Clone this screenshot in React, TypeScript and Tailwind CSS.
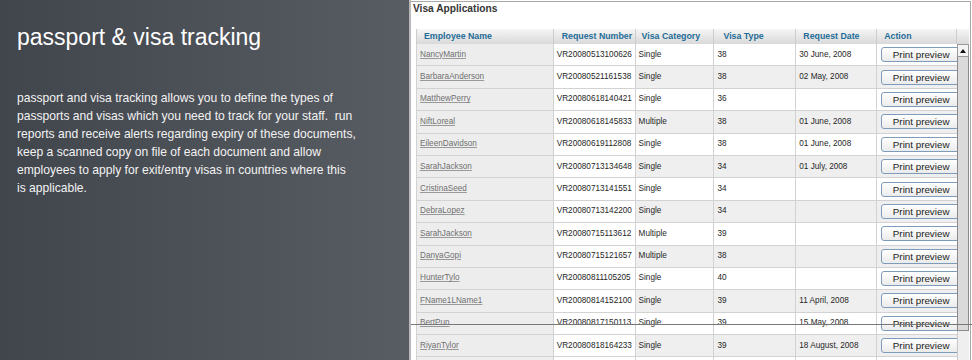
import React from "react";

type Row = { name: string; num: string; cat: string; type: string; date: string };

const rows: Row[] = [
  { name: "NancyMartin", num: "VR20080513100626", cat: "Single", type: "38", date: "30 June, 2008" },
  { name: "BarbaraAnderson", num: "VR20080521161538", cat: "Single", type: "38", date: "02 May, 2008" },
  { name: "MatthewPerry", num: "VR20080618140421", cat: "Single", type: "36", date: "" },
  { name: "NiftLoreal", num: "VR20080618145833", cat: "Multiple", type: "38", date: "01 June, 2008" },
  { name: "EileenDavidson", num: "VR20080619112808", cat: "Single", type: "38", date: "01 June, 2008" },
  { name: "SarahJackson", num: "VR20080713134648", cat: "Single", type: "34", date: "01 July, 2008" },
  { name: "CristinaSeed", num: "VR20080713141551", cat: "Single", type: "34", date: "" },
  { name: "DebraLopez", num: "VR20080713142200", cat: "Single", type: "34", date: "" },
  { name: "SarahJackson", num: "VR20080715113612", cat: "Multiple", type: "39", date: "" },
  { name: "DanyaGopi", num: "VR20080715121657", cat: "Multiple", type: "38", date: "" },
  { name: "HunterTylo", num: "VR20080811105205", cat: "Single", type: "40", date: "" },
  { name: "FName1LName1", num: "VR20080814152100", cat: "Single", type: "39", date: "11 April, 2008" },
  { name: "BertPun", num: "VR20080817150113", cat: "Single", type: "39", date: "15 May, 2008" },
  { name: "RiyanTylor", num: "VR20080818164233", cat: "Single", type: "39", date: "18 August, 2008" },
  { name: "", num: "", cat: "", type: "", date: "" },
];

const headCell =
  "h-full flex items-center border-r border-[#cdcdcd] text-[#1f6d98] font-bold text-[8.8px]";
const cell =
  "h-full flex items-center pl-[3px] border-r border-b border-[#d2d2d2] overflow-hidden whitespace-nowrap";

export default function App() {
  return (
    <div
      className="relative w-[972px] h-[360px] overflow-hidden flex bg-white"
      style={{ fontFamily: '"Liberation Sans", Arial, sans-serif' }}
    >
      {/* Left panel */}
      <div className="w-[409px] h-full bg-linear-to-r from-[#41454c] to-[#585c63] pl-[17px] pt-[24px]">
        <h1 className="text-[23px] leading-[26px] text-white font-normal">passport &amp; visa tracking</h1>
        <p className="mt-[39px] text-[12.1px] leading-[18px] text-[#f3f3f3]">
          passport and visa tracking allows you to define the types of
          <br />
          passports and visas which you need to track for your staff.{"\u00a0"} run
          <br />
          reports and receive alerts regarding expiry of these documents,
          <br />
          keep a scanned copy on file of each document and allow
          <br />
          employees to apply for exit/entry visas in countries where this
          <br />
          is applicable.
        </p>
      </div>

      {/* divider */}
      <div className="w-[2px] h-full bg-[#b9b9b9]" />

      {/* Right panel */}
      <div className="w-[560px] h-full border-t border-r border-[#a9a9a9] bg-white mt-[1px]">
        <div className="pl-[2px] pt-[1px] text-[10.2px] leading-[12px] font-bold text-[#363636]">
          Visa Applications
        </div>
        <div className="mt-[14px] ml-[5px] flex">
          {/* table */}
          <div className="w-[541px] text-[8.2px] text-[#262626]">
            <div className="h-[15px] flex bg-linear-to-b from-[#f6f6f6] to-[#d9d9d9] border-l border-[#cdcdcd]">
              <div className={`${headCell} w-[137px] pl-[7px]`}>Employee Name</div>
              <div className={`${headCell} w-[82px] pl-[8px]`}>Request Number</div>
              <div className={`${headCell} w-[79px] pl-[6px]`}>Visa Category</div>
              <div className={`${headCell} w-[82px] pl-[9px]`}>Visa Type</div>
              <div className={`${headCell} w-[81px] pl-[7px]`}>Request Date</div>
              <div className={`${headCell} w-[80px] pl-[7px]`}>Action</div>
            </div>
            {rows.map((r, i) => {
              const alt = i % 2 === 1 ? "bg-[#efefef]" : "bg-white";
              return (
                <div key={i} className="h-[22.4px] flex border-l border-[#d2d2d2]">
                  <div className={`${cell} w-[137px] bg-[#ededed]`}>
                    <span className="underline text-[#6f6f6f] decoration-[#999]">{r.name}</span>
                  </div>
                  <div className={`${cell} w-[82px] bg-white`}>{r.num}</div>
                  <div className={`${cell} w-[79px] ${alt}`}>{r.cat}</div>
                  <div className={`${cell} w-[82px] ${alt}`}>{r.type}</div>
                  <div className={`${cell} w-[81px] ${alt}`}>{r.date}</div>
                  <div
                    className={`h-full flex items-center pl-[4px] border-b border-[#d2d2d2] w-[80px] overflow-hidden ${alt}`}
                  >
                    {r.name && (
                      <button className="shrink-0 w-[80px] h-[15px] rounded-[3px] border border-[#7d9cbc] bg-linear-to-b from-white to-[#ebebeb] text-[9.8px] leading-[13px] text-[#1d1d1d] text-center">
                        Print preview
                      </button>
                    )}
                  </div>
                </div>
              );
            })}
          </div>
          {/* scrollbar */}
          <div className="w-[12px] flex flex-col">
            <div className="h-[15px] bg-linear-to-b from-[#f6f6f6] to-[#d9d9d9]" />
            <div className="h-[13px] border border-[#9a9a9a] bg-[#f3f3f3] flex items-center justify-center">
              <svg width="6" height="4" viewBox="0 0 6 4">
                <polygon points="3,0 6,4 0,4" fill="#111" />
              </svg>
            </div>
            <div className="h-[274px] bg-[#dadada] border-l border-r border-b border-[#8a8a8a]" />
            <div className="flex-1 bg-[#efefef] border-l border-[#c8c8c8] h-[40px]" />
          </div>
        </div>
      </div>

      {/* overlay line from the screenshot */}
      <div className="absolute top-[324px] left-[411px] right-0 h-px bg-[#777]" />
    </div>
  );
}
